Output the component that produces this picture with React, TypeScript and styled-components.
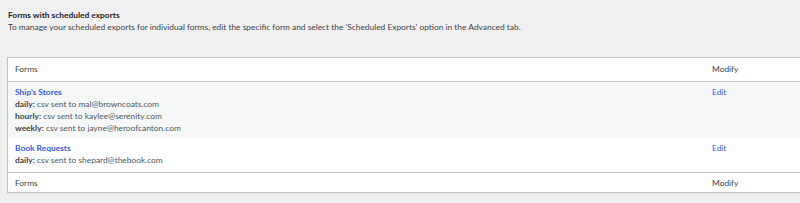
import React from 'react';
import styled, { createGlobalStyle } from 'styled-components';

const GlobalStyle = createGlobalStyle`
	html, body {
		margin: 0;
		padding: 0;
		background: #f0f0f1;
	}
	body {
		font-family: Lato, "Open Sans", sans-serif;
		color: #3c434a;
		font-size: 8.4px;
	}
`;

const Page = styled.div`
	padding: 9px 0 0 8px;
	overflow: hidden;
	height: 203px;
	box-sizing: border-box;
`;

const Title = styled.h2`
	margin: 0;
	font-size: 8.4px;
	line-height: 12px;
	font-weight: 700;
	color: #1d2327;
`;

const Intro = styled.p`
	margin: 0;
	font-size: 8.4px;
	line-height: 12px;
`;

const Table = styled.table`
	margin: 24px 0 0 -1px;
	width: 810px;
	border-collapse: collapse;
	background: #fff;
	border: 1px solid #c3c4c7;
	box-shadow: 0 1px 1px rgba(0, 0, 0, 0.04);
	table-layout: fixed;
`;

const HeadCell = styled.th<{ $w?: string }>`
	text-align: left;
	font-weight: 400;
	color: #3c434a;
	line-height: 12px;
	width: ${({ $w }) => $w || 'auto'};
`;

const HeadRow = styled.tr<{ $foot?: boolean }>`
	border-${({ $foot }) => ($foot ? 'top' : 'bottom')}: 1px solid #c3c4c7;
	th {
		padding: ${({ $foot }) => ($foot ? '4px 7px 3px' : '5px 7px 6px')};
	}
`;

const Row = styled.tr<{ $alt?: boolean }>`
	background: ${({ $alt }) => ($alt ? '#f6f7f7' : '#fff')};
	&:last-child td {
		padding-bottom: 6px;
	}
`;

const Cell = styled.td`
	vertical-align: top;
	padding: 4px 7px;
	line-height: 12px;
`;

const FormLink = styled.a`
	display: block;
	color: #3858e9;
	font-weight: 700;
	text-decoration: none;
`;

const EditLink = styled.a`
	color: #3858e9;
	text-decoration: none;
`;

const Line = styled.div`
	color: #50575e;
	b {
		color: #3c434a;
		font-weight: 700;
	}
`;

interface Form {
	name: string;
	exports: { freq: string; to: string }[];
}

const forms: Form[] = [
	{
		name: "Ship's Stores",
		exports: [
			{ freq: 'daily', to: 'mal@browncoats.com' },
			{ freq: 'hourly', to: 'kaylee@serenity.com' },
			{ freq: 'weekly', to: 'jayne@heroofcanton.com' },
		],
	},
	{
		name: 'Book Requests',
		exports: [{ freq: 'daily', to: 'shepard@thebook.com' }],
	},
];

export default function App() {
	return (
		<Page>
			<GlobalStyle />
			<Title>Forms with scheduled exports</Title>
			<Intro>
				To manage your scheduled exports for individual forms, edit the specific form and select the
				'Scheduled Exports' option in the Advanced tab.
			</Intro>
			<Table>
				<thead>
					<HeadRow>
						<HeadCell $w="683px">Forms</HeadCell>
						<HeadCell>Modify</HeadCell>
					</HeadRow>
				</thead>
				<tbody>
					{forms.map((f, i) => (
						<Row key={f.name} $alt={i % 2 === 0}>
							<Cell>
								<FormLink href="#">{f.name}</FormLink>
								{f.exports.map((e) => (
									<Line key={e.freq}>
										<b>{e.freq}:</b> csv sent to {e.to}
									</Line>
								))}
							</Cell>
							<Cell>
								<EditLink href="#">Edit</EditLink>
							</Cell>
						</Row>
					))}
				</tbody>
				<tfoot>
					<HeadRow $foot>
						<HeadCell>Forms</HeadCell>
						<HeadCell>Modify</HeadCell>
					</HeadRow>
				</tfoot>
			</Table>
		</Page>
	);
}
